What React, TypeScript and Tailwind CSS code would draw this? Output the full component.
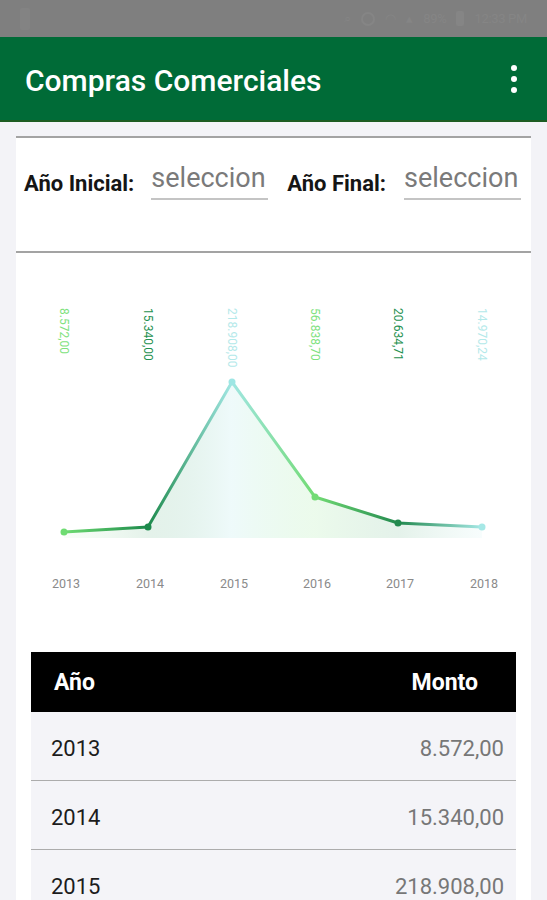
import React from 'react';

const points = [
    { year: '2013', value: '8.572,00', x: 48, y: 279, color: '#7ee27e', dot: '#6fdc72' },
    { year: '2014', value: '15.340,00', x: 132, y: 274, color: '#1f9150', dot: '#1d8a4c' },
    { year: '2015', value: '218.908,00', x: 216, y: 129, color: '#b4e9ea', dot: '#9ee6e4' },
    { year: '2016', value: '56.838,70', x: 299, y: 244, color: '#7ee27e', dot: '#72db74' },
    { year: '2017', value: '20.634,71', x: 382, y: 270, color: '#1f9150', dot: '#22894e' },
    { year: '2018', value: '14.970,24', x: 466, y: 274, color: '#b4e9ea', dot: '#a6e8e6' },
];

const rows = [
    { year: '2013', amount: '8.572,00' },
    { year: '2014', amount: '15.340,00' },
    { year: '2015', amount: '218.908,00' },
    { year: '2016', amount: '56.838,70' },
];

function StatusBar() {
    return (
        <div className="h-[37px] bg-[#7f7f7f] flex items-center justify-between px-[20px]">
            <div className="w-[10px] h-[22px] rounded-[2px] bg-[#838383]" />
            <div className="flex items-center gap-[10px] text-[#858585] text-[13px]">
                <span>⌕</span>
                <div className="w-[14px] h-[14px] rounded-full border-2 border-[#858585]" />
                <span>◠</span>
                <span>▴</span>
                <span className="tracking-tight">89%</span>
                <div className="w-[8px] h-[15px] rounded-[2px] bg-[#858585]" />
                <span className="tracking-tight">12:33 PM</span>
            </div>
        </div>
    );
}

function Chart() {
    const line = points.map((p) => `${p.x},${p.y}`).join(' ');
    const area = `M${points[0].x},285 L${line.split(' ').join(' L')} L${points[5].x},285 Z`;
    return (
        <svg width="515" height="399" viewBox="0 0 515 399" className="block">
            <defs>
                <linearGradient id="lineGrad" x1="48" y1="0" x2="466" y2="0" gradientUnits="userSpaceOnUse">
                    <stop offset="0" stopColor="#6fdc72" />
                    <stop offset="0.2" stopColor="#1d8a4c" />
                    <stop offset="0.4" stopColor="#a0e6e2" />
                    <stop offset="0.6" stopColor="#72db74" />
                    <stop offset="0.8" stopColor="#22894e" />
                    <stop offset="1" stopColor="#a6e8e6" />
                </linearGradient>
                <linearGradient id="areaGrad" x1="48" y1="0" x2="466" y2="0" gradientUnits="userSpaceOnUse">
                    <stop offset="0" stopColor="#7ee27e" stopOpacity="0.05" />
                    <stop offset="0.2" stopColor="#1f9150" stopOpacity="0.12" />
                    <stop offset="0.4" stopColor="#b4e9ea" stopOpacity="0.22" />
                    <stop offset="0.6" stopColor="#7ee27e" stopOpacity="0.15" />
                    <stop offset="0.8" stopColor="#1f9150" stopOpacity="0.12" />
                    <stop offset="1" stopColor="#b4e9ea" stopOpacity="0.1" />
                </linearGradient>
            </defs>
            {points.map((p) => (
                <text
                    key={p.value}
                    x={p.x - 1}
                    y={55}
                    transform={`rotate(90 ${p.x - 1} 55)`}
                    fill={p.color}
                    fontSize="12"
                    dominantBaseline="middle"
                    fontFamily="Roboto, 'Noto Sans', sans-serif"
                >
                    {p.value}
                </text>
            ))}
            <path d={area} fill="url(#areaGrad)" />
            <polyline points={line} fill="none" stroke="url(#lineGrad)" strokeWidth="3" strokeLinejoin="round" />
            {points.map((p) => (
                <circle key={p.year} cx={p.x} cy={p.y} r="3.5" fill={p.dot} />
            ))}
            {points.map((p) => (
                <text
                    key={'y' + p.year}
                    x={p.x + 2}
                    y={335}
                    textAnchor="middle"
                    fill="#8a8a8a"
                    fontSize="12.5"
                    fontFamily="Roboto, 'Noto Sans', sans-serif"
                >
                    {p.year}
                </text>
            ))}
        </svg>
    );
}

export default function App() {
    return (
        <div className="w-[547px] h-[900px] overflow-hidden bg-[#f3f3f7] font-['Roboto','Noto_Sans',sans-serif]">
            <StatusBar />
            <div className="h-[85px] bg-[#006b37] border-b-2 border-[#1c5c22] flex items-center justify-between pl-[25px] pr-[30px]">
                <h1 className="text-white text-[30px] font-medium mt-[3px]">Compras Comerciales</h1>
                <div className="flex flex-col gap-[5px]">
                    <span className="w-[6px] h-[6px] rounded-full bg-white" />
                    <span className="w-[6px] h-[6px] rounded-full bg-white" />
                    <span className="w-[6px] h-[6px] rounded-full bg-white" />
                </div>
            </div>
            <div className="mt-[14px] ml-[16px] w-[515px] bg-white">
                <div className="h-[117px] border-t-2 border-b-2 border-[#a3a3a3] pl-[8px] pt-[24px]">
                    <div className="flex items-start">
                        <span className="mt-[6px] text-[22px] leading-[32px] font-bold text-[#151515]">Año Inicial:</span>
                        <div className="ml-[17px] w-[117px] border-b-2 border-[#c4c4c4] h-[38px] text-[27px] text-[#7a7a7a] leading-[32px] whitespace-nowrap overflow-hidden">seleccion</div>
                        <span className="ml-[19px] mt-[6px] text-[22px] leading-[32px] font-bold text-[#151515]">Año Final:</span>
                        <div className="ml-[18px] w-[117px] border-b-2 border-[#c4c4c4] h-[38px] text-[27px] text-[#7a7a7a] leading-[32px] whitespace-nowrap overflow-hidden">seleccion</div>
                    </div>
                </div>
                <Chart />
                <div className="mx-[15px]">
                    <div className="h-[60px] bg-black flex items-center justify-between pl-[23px] pr-[38px] pt-[3px] text-white text-[23px] font-bold">
                        <span>Año</span>
                        <span>Monto</span>
                    </div>
                    {rows.map((r) => (
                        <div key={r.year} className="h-[69px] bg-[#f4f4f8] border-b border-[#acacac] flex items-center justify-between pl-[20px] pr-[12px] pt-[4px] text-[22px]">
                            <span className="text-[#1c1c1c]">{r.year}</span>
                            <span className="text-[#777]">{r.amount}</span>
                        </div>
                    ))}
                </div>
            </div>
        </div>
    );
}
